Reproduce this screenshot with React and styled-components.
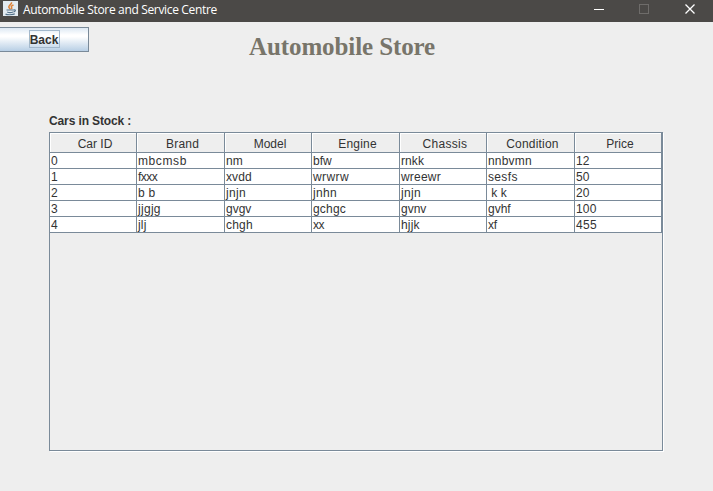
import React from "react";
import styled, { createGlobalStyle } from "styled-components";

const GlobalStyle = createGlobalStyle`
  * { box-sizing: border-box; }
  html, body { margin: 0; background: #eeeeee; overflow: hidden; }
`;

const Window = styled.div`
  width: 713px;
  height: 491px;
  display: flex;
  flex-direction: column;
  background: #eeeeee;
  color: #333333;
  font: 12px/15px "Liberation Sans", Arial, sans-serif;
  overflow: hidden;
`;

const TitleBar = styled.header`
  display: flex;
  align-items: center;
  flex: none;
  height: 22px;
  padding: 0 17px 4px 3px;
  background: #4b4947;
  color: #ffffff;
`;

const JavaIcon = styled.svg`
  flex: none;
  width: 15px;
  height: 16px;
`;

const WindowTitle = styled.div`
  flex: 1;
  margin-left: 5px;
  font: 12px/20px "Open Sans", "Noto Sans", sans-serif;
  height: 18px;
  letter-spacing: ${(p) => p.$tracking}px;
  white-space: nowrap;
`;

const WindowControls = styled.div`
  display: flex;
  gap: 35px;
  height: 18px;
  align-items: center;

  svg { display: block; width: 11px; height: 11px; }
`;

const Toolbar = styled.div`
  display: flex;
  flex: none;
  height: 92px;
  padding-top: 5px;
`;

const BackButton = styled.button`
  display: flex;
  align-items: flex-start;
  justify-content: center;
  width: 89px;
  height: 25px;
  padding: 2px 0 0;
  border: 1px solid #7a8a99;
  border-left: 0;
  background: linear-gradient(#dde8f3 0%, #ffffff 30%, #ffffff 38%, #b8cfe5 100%);
  color: #333333;
  font: bold 12px/15px "Liberation Sans", Arial, sans-serif;
`;

const FocusRing = styled.span`
  width: 31px;
  height: 18px;
  border: 1px solid #a3b8cc;
  line-height: 18px;
  text-align: center;
  white-space: nowrap;
`;

const Heading = styled.h1`
  margin: 5px 0 0 160px;
  color: #78756a;
  font: bold 25px/30px "Liberation Serif", "Times New Roman", serif;
  letter-spacing: ${(p) => p.$tracking}px;
  white-space: nowrap;
`;

const StockLabel = styled.div`
  flex: none;
  height: 18px;
  margin-left: 49px;
  font-weight: bold;
  letter-spacing: ${(p) => p.$tracking}px;
`;

const ScrollPane = styled.div`
  flex: none;
  width: 614px;
  height: 319px;
  margin-left: 49px;
  border: 1px solid #7a8a99;
  box-shadow: 1px 1px 0 #ffffff;
`;

const Row = styled.div`
  display: grid;
  grid-template-columns: 87px 88px 87px 88px 87px 88px 87px;
`;

const HeaderCell = styled.div`
  height: 20px;
  padding-left: 4px;
  border-right: 1px solid #7a8a99;
  border-bottom: 1px solid #7a8a99;
  box-shadow: inset 1px 1px 0 #ffffff;
  line-height: 23px;
  text-align: center;
  letter-spacing: ${(p) => p.$tracking}px;
`;

const Cell = styled.div`
  height: 16px;
  padding-left: 1px;
  border-right: 1px solid #7a8a99;
  border-bottom: 1px solid #7a8a99;
  background: #ffffff;
  line-height: 16px;
  white-space: pre;
  letter-spacing: ${(p) => p.$tracking}px;
`;

const columns = [
  ["Car ID", 0], ["Brand", 0.2], ["Model", 0], ["Engine", 0.2],
  ["Chassis", 0.3], ["Condition", 0.2], ["Price", 0],
];

const cars = [
  [["0", 0], ["mbcmsb", 0.6], ["nm", 0.2], ["bfw", 0], ["rnkk", 0.1], ["nnbvmn", 0.2], ["12", 0]],
  [["1", 0], ["fxxx", -0.5], ["xvdd", 0.1], ["wrwrw", 0.4], ["wreewr", 0.2], ["sesfs", 0.35], ["50", 0]],
  [["2", 0], ["b b", 0.2], ["jnjn", 0.3], ["jnhn", 0.3], ["jnjn", 0.3], [" k k", 0], ["20", 0]],
  [["3", 0], ["jjgjg", 0.3], ["gvgv", 0], ["gchgc", 0.2], ["gvnv", 0], ["gvhf", 0], ["100", 0.2]],
  [["4", 0], ["jlj", 0.2], ["chgh", 0.2], ["xx", -0.4], ["hjjk", 0.2], ["xf", -0.2], ["455", 0.3]],
];

export default function App() {
  return (
    <>
      <GlobalStyle />
      <Window>
        <TitleBar>
          <JavaIcon viewBox="0 0 15 16" fill="none">
            <rect width="15" height="15" fill="#e3ebf1" />
            <path d="M8.5 1.2C9.2 3.4 5.2 4.3 5.8 6.2c.2 1 1.4 1.2 1.4 2.2M10.5 3.8C8.5 4.8 7.8 5.5 8.6 6.5c.4.6.2 1.1-.2 1.6" stroke="#dd8238" strokeWidth="1.5" />
            <path d="M3.5 9h7.5M4.2 11c1.5.6 4.2.6 5.8 0M11 8.8c2-.3 1.6 1.8-.6 2.2M2.5 12.8c1 1.3 7.7 1.2 9.3 0" stroke="#54728a" strokeWidth="1.2" />
          </JavaIcon>
          <WindowTitle $tracking={-0.34}>Automobile Store and Service Centre</WindowTitle>
          <WindowControls>
            <svg viewBox="0 0 11 11"><path d="M1 5.5h10" stroke="#fff" /></svg>
            <svg viewBox="0 0 11 11"><rect x=".5" y=".5" width="9" height="9" fill="none" stroke="#6e6c6a" /></svg>
            <svg viewBox="0 0 11 11"><path d="M.5.5l9 9M9.5.5l-9 9" stroke="#fff" strokeWidth="1.3" /></svg>
          </WindowControls>
        </TitleBar>
        <Toolbar>
          <BackButton><FocusRing>Back</FocusRing></BackButton>
          <Heading $tracking={-0.1}>Automobile Store</Heading>
        </Toolbar>
        <StockLabel $tracking={-0.12}>Cars in Stock :</StockLabel>
        <ScrollPane>
          <Row>
            {columns.map(([name, tracking]) => (
              <HeaderCell key={name} $tracking={tracking}>{name}</HeaderCell>
            ))}
          </Row>
          {cars.map((car) => (
            <Row key={car[0][0]}>
              {car.map(([value, tracking], i) => (
                <Cell key={i} $tracking={tracking}>{value}</Cell>
              ))}
            </Row>
          ))}
        </ScrollPane>
      </Window>
    </>
  );
}
